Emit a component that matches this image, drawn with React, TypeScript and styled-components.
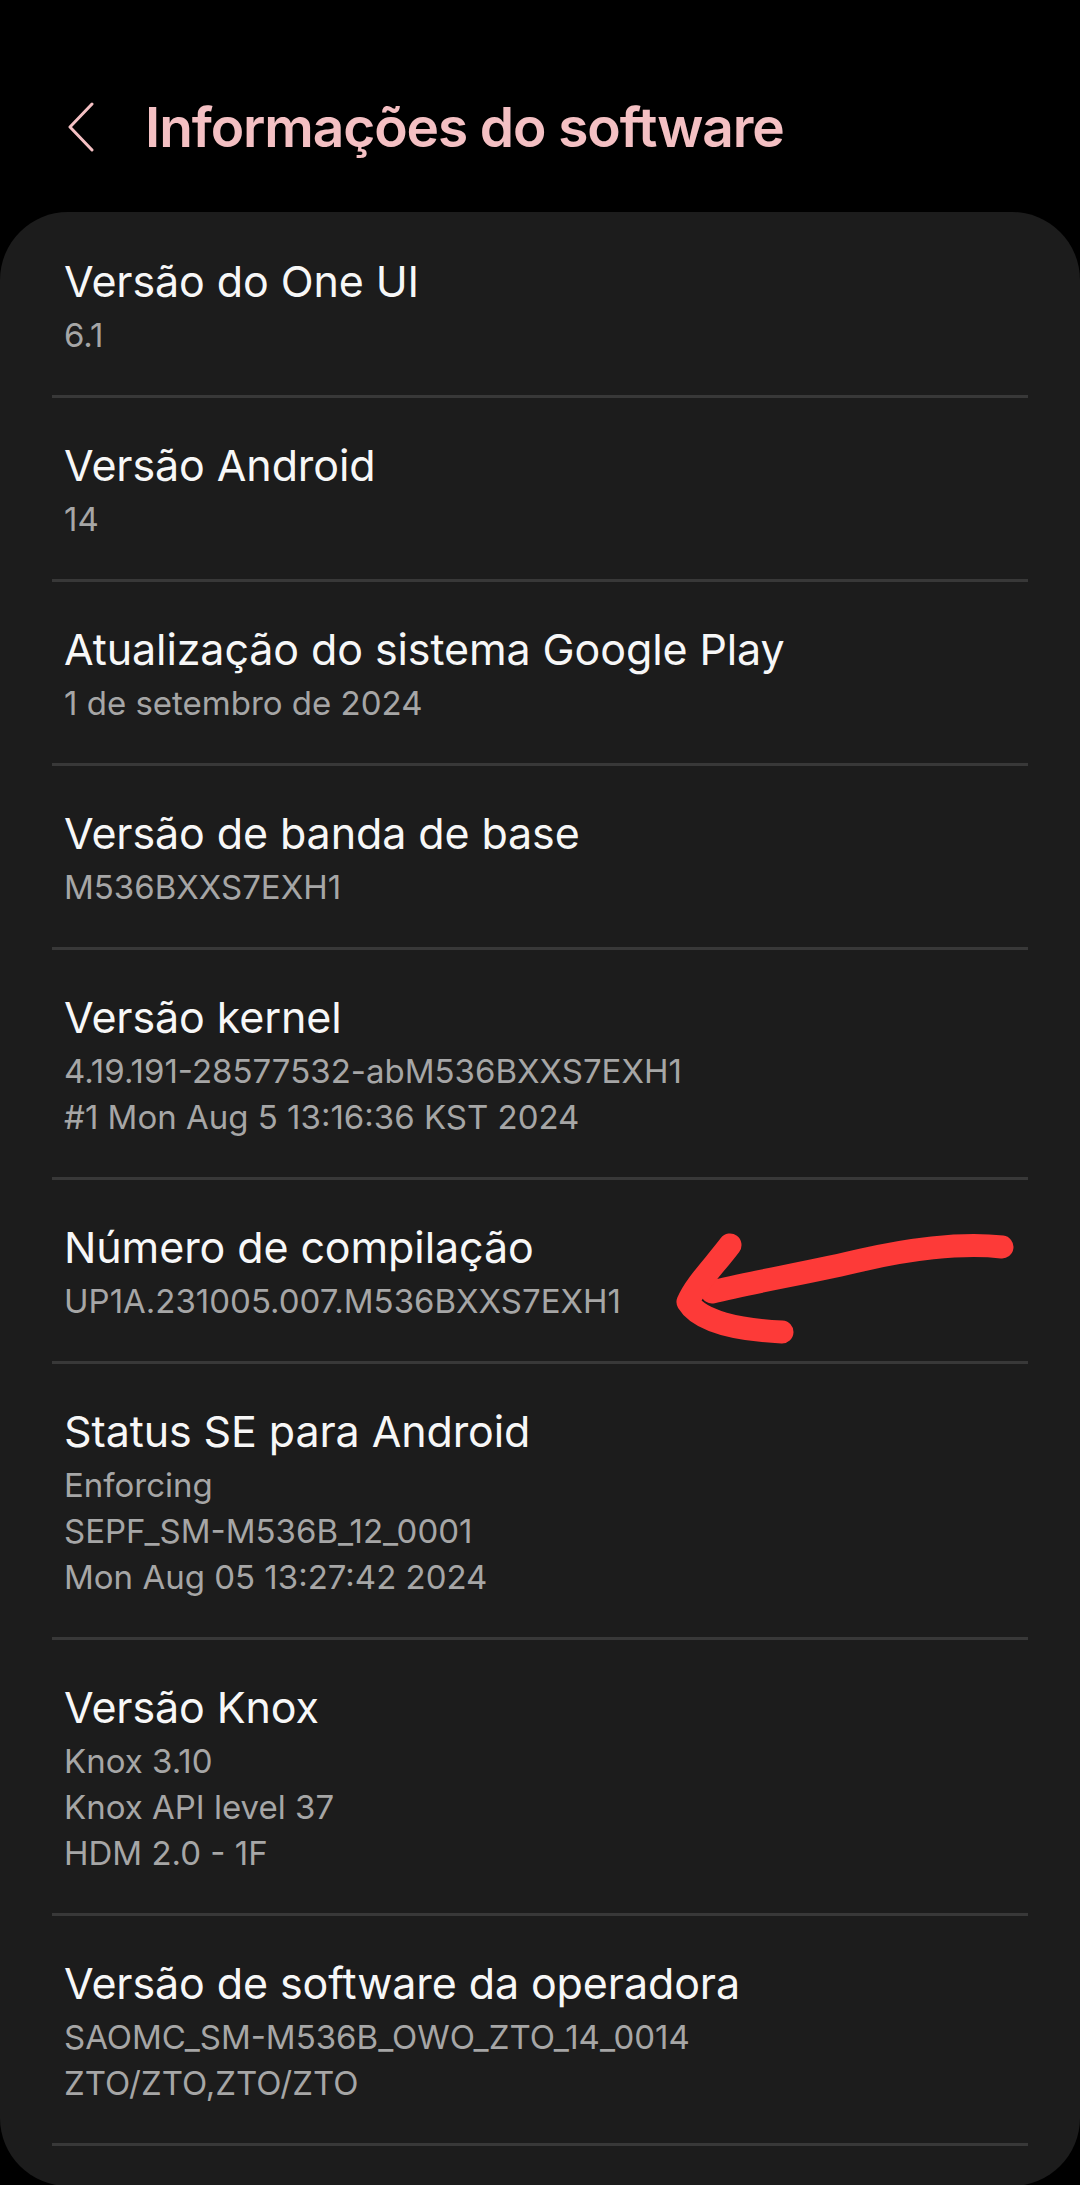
import React from "react";
import styled, { createGlobalStyle } from "styled-components";

const GlobalStyle = createGlobalStyle`
  html, body {
    margin: 0;
    padding: 0;
    background: #000000;
  }
  body {
    font-family: Inter, Roboto, "Noto Sans", sans-serif;
    -webkit-font-smoothing: antialiased;
  }
  * { box-sizing: border-box; }
`;

const Screen = styled.div`
  position: relative;
  width: 1080px;
  min-height: 2185px;
  background: #000000;
  display: flex;
  flex-direction: column;
`;

const Header = styled.header`
  height: 212px;
  padding: 42px 0 0 69px;
  display: flex;
  align-items: center;
  gap: 50px;
`;

const BackButton = styled.button`
  display: flex;
  align-items: center;
  justify-content: center;
  width: 28px;
  height: 50px;
  padding: 0;
  border: 0;
  background: transparent;
  margin-left: -2px;
`;

const Title = styled.h1`
  margin: 0;
  font-family: Inter, Roboto, sans-serif;
  font-weight: 600;
  font-size: 55px;
  line-height: 66px;
  color: #f4c0c3;
  letter-spacing: -1.1px;
`;

const Card = styled.section`
  flex: 1;
  margin-bottom: 2px;
  background: #1c1c1c;
  border-radius: 68px;
  padding: 2px 52px 40px;
  display: flex;
  flex-direction: column;
`;

const Item = styled.div`
  padding: 36px 12px 37px;
  border-bottom: 3px solid #383838;
  display: flex;
  flex-direction: column;
`;

const ItemTitle = styled.div`
  font-size: 43px;
  line-height: 62px;
  font-weight: 400;
  color: #f7f7f7;
  letter-spacing: -0.1px;
`;

const ItemLine = styled.div`
  font-size: 33px;
  line-height: 46px;
  color: #a6a6a6;
  letter-spacing: 0;
`;

const Annotation = styled.svg`
  position: absolute;
  left: 0;
  top: 0;
  width: 1080px;
  height: 2185px;
  pointer-events: none;
`;

const items: { title: string; lines: string[] }[] = [
  { title: "Versão do One UI", lines: ["6.1"] },
  { title: "Versão Android", lines: ["14"] },
  { title: "Atualização do sistema Google Play", lines: ["1 de setembro de 2024"] },
  { title: "Versão de banda de base", lines: ["M536BXXS7EXH1"] },
  {
    title: "Versão kernel",
    lines: ["4.19.191-28577532-abM536BXXS7EXH1", "#1 Mon Aug 5 13:16:36 KST 2024"],
  },
  { title: "Número de compilação", lines: ["UP1A.231005.007.M536BXXS7EXH1"] },
  {
    title: "Status SE para Android",
    lines: ["Enforcing", "SEPF_SM-M536B_12_0001", "Mon Aug 05 13:27:42 2024"],
  },
  { title: "Versão Knox", lines: ["Knox 3.10", "Knox API level 37", "HDM 2.0 - 1F"] },
  {
    title: "Versão de software da operadora",
    lines: ["SAOMC_SM-M536B_OWO_ZTO_14_0014", "ZTO/ZTO,ZTO/ZTO"],
  },
];

export default function App() {
  return (
    <Screen>
      <GlobalStyle />
      <Header>
        <BackButton aria-label="Voltar">
          <svg width="28" height="50" viewBox="0 0 28 50">
            <path
              d="M25 2 L3 25 L25 48"
              fill="none"
              stroke="#f4c0c3"
              strokeWidth="3"
              strokeLinecap="round"
              strokeLinejoin="round"
            />
          </svg>
        </BackButton>
        <Title>Informações do software</Title>
      </Header>
      <Card>
        {items.map((it) => (
          <Item key={it.title}>
            <ItemTitle>{it.title}</ItemTitle>
            {it.lines.map((l) => (
              <ItemLine key={l}>{l}</ItemLine>
            ))}
          </Item>
        ))}
      </Card>
      <Annotation viewBox="0 0 1080 2185">
        <g
          fill="none"
          stroke="#fd3a38"
          strokeWidth="23"
          strokeLinecap="round"
          strokeLinejoin="round"
        >
          <path d="M1002 1247 C960 1242 905 1250 862 1260 C812 1272 752 1282 712 1292" />
          <path d="M730 1245 C715 1265 695 1285 688 1302 C700 1322 740 1330 782 1332" />
        </g>
      </Annotation>
    </Screen>
  );
}
